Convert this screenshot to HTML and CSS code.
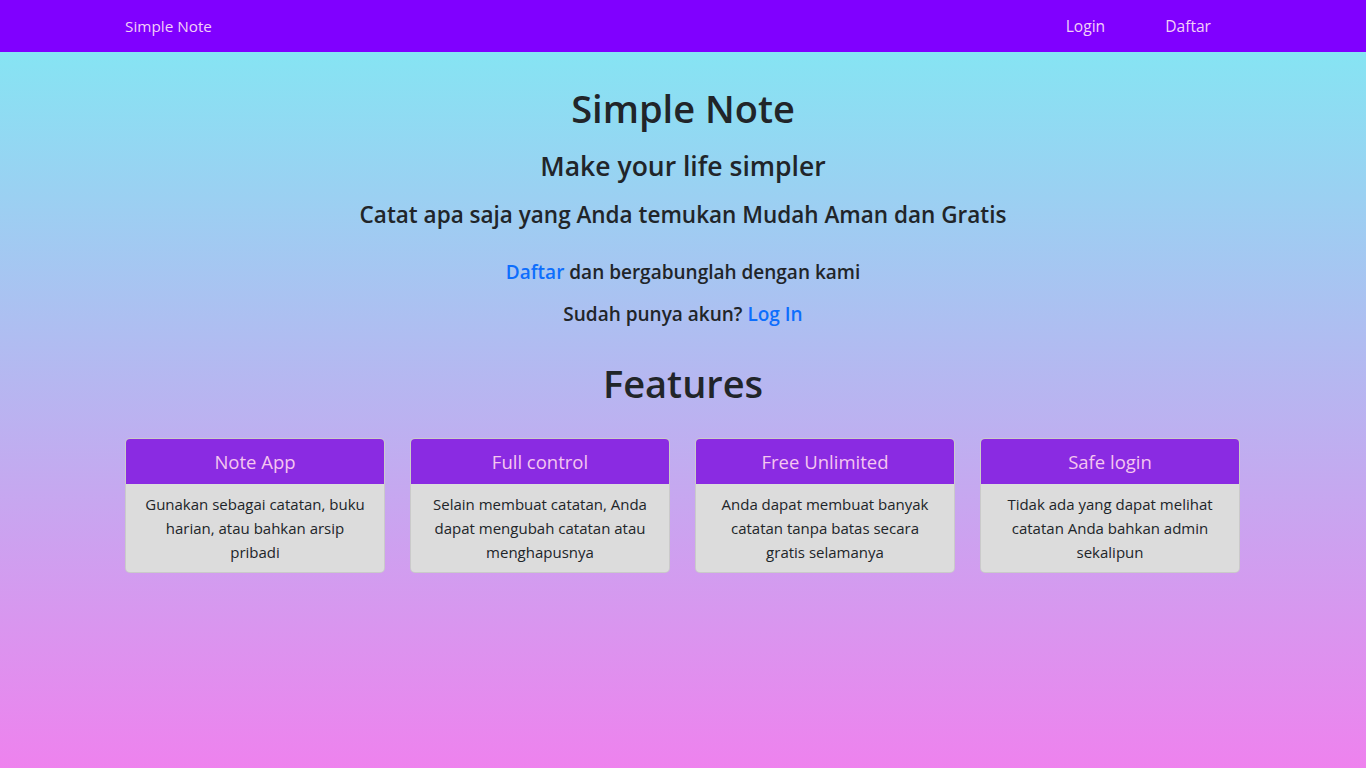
FILE: index.html
```html
<!DOCTYPE html>
<html lang="id">
<head>
<meta charset="utf-8">
<title>Simple Note</title>
<link rel="stylesheet" href="styles.css">
</head>
<body>
<nav class="navbar">
  <div class="container nav-inner">
    <a class="brand" href="#">Simple Note</a>
    <div class="nav-links">
      <a class="nav-link" href="#">Login</a>
      <a class="nav-link" href="#">Daftar</a>
    </div>
  </div>
</nav>
<main class="container hero">
  <h1 class="title">Simple Note</h1>
  <h3 class="tagline">Make your life simpler</h3>
  <h4 class="sub">Catat apa saja yang Anda temukan Mudah Aman dan Gratis</h4>
  <h5 class="cta"><a href="#">Daftar</a> dan bergabunglah dengan kami</h5>
  <h5 class="cta cta2">Sudah punya akun? <a href="#">Log In</a></h5>
  <h1 class="features-title">Features</h1>
  <div class="cards">
    <div class="card">
      <div class="card-header">Note App</div>
      <div class="card-body">Gunakan sebagai catatan, buku harian, atau bahkan arsip pribadi</div>
    </div>
    <div class="card">
      <div class="card-header">Full control</div>
      <div class="card-body">Selain membuat catatan, Anda dapat mengubah catatan atau menghapusnya</div>
    </div>
    <div class="card">
      <div class="card-header">Free Unlimited</div>
      <div class="card-body">Anda dapat membuat banyak catatan tanpa batas secara gratis selamanya</div>
    </div>
    <div class="card">
      <div class="card-header">Safe login</div>
      <div class="card-body">Tidak ada yang dapat melihat catatan Anda bahkan admin sekalipun</div>
    </div>
  </div>
</main>
</body>
</html>
```
FILE: styles.css
```css
* { box-sizing: border-box; }
html, body { height: 100%; }
body {
  margin: 0;
  font-family: "Open Sans", "Noto Sans", sans-serif;
  color: #212529;
  background: linear-gradient(to bottom, #86e4f3 52px, #ee82ee 100%);
  min-height: 768px;
}
a { text-decoration: none; }
.container {
  width: 1140px;
  margin: 0 auto;
  padding: 0 12px;
}
.navbar {
  background: #8000ff;
  height: 52px;
}
.nav-inner {
  display: flex;
  align-items: center;
  justify-content: space-between;
  height: 52px;
}
.brand {
  color: #f3d0f8;
  font-size: 15.3px;
}
.nav-links { display: flex; }
.nav-link {
  color: #f3d0f8;
  font-size: 15.6px;
  padding: 0 30px;
}
.hero { text-align: center; padding-top: 32px; }
h1, h3, h4, h5 { margin: 0; font-weight: 600; }
.title { font-size: 38px; line-height: 48px; }
.tagline { font-size: 26.5px; line-height: 34px; margin-top: 17px; }
.sub { font-size: 22.5px; line-height: 29px; margin-top: 17px; }
.cta { font-size: 19px; line-height: 24px; margin-top: 31px; }
.cta2 { margin-top: 18px; }
.cta a { color: #0d6efd; }
.features-title { font-size: 38px; line-height: 48px; margin-top: 33px; }
.cards {
  display: grid;
  grid-template-columns: repeat(4, 260px);
  column-gap: 25px;
  margin-top: 31px;
}
.card {
  border-radius: 5px;
  overflow: hidden;
  border: 1px solid rgba(0,0,0,0.08);
  background: #dcdcdc;
}
.card-header {
  background: #8a2be2;
  color: #f5c6f0;
  font-size: 18.5px;
  height: 45px;
  display: flex;
  align-items: center;
  justify-content: center;
  padding-bottom: 1px;
}
.card-body {
  padding: 8px 16px;
  font-size: 15px;
  line-height: 24px;
}
```
